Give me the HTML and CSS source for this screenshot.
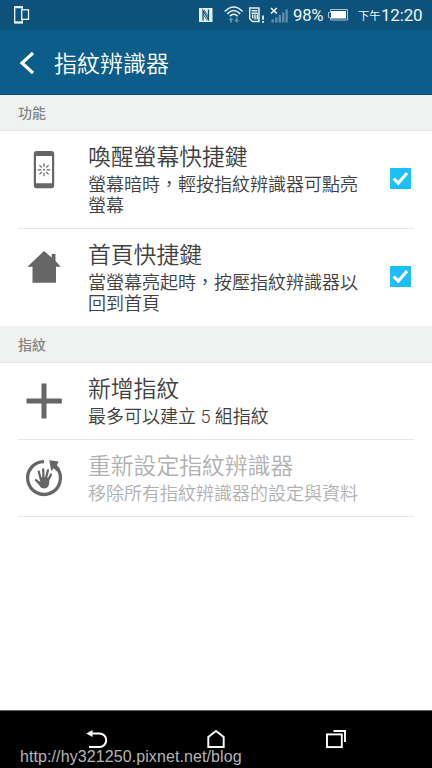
FILE: index.html
```html
<!DOCTYPE html>
<html lang="zh-Hant">
<head>
<meta charset="utf-8">
<title>指紋辨識器</title>
<link rel="stylesheet" href="styles.css">
</head>
<body>
<div class="screen">
  <div class="status">
    <svg class="st-device" width="18" height="20" viewBox="0 0 18 20" fill="none" stroke="#eef5f9">
      <path d="M9.200 4.500V2H1.700V17.500H9.200V14.500" stroke-width="1.300"/>
      <path d="M1 2.300H10M1 17.500H10" stroke-width="2"/>
      <rect x="8.700" y="4.800" width="6.800" height="9.500" stroke-width="1.300"/>
    </svg>
    <svg class="st-icons" width="92" height="20" viewBox="0 0 92 20">
      <path d="M1 3H14.500V17H1Z" fill="#e6eff4"/>
      <path d="M5 15.500V5.500L10.500 14.500V4.500" fill="none" stroke="#0d527b" stroke-width="1.300"/>
      <path d="M6.200 5L10.500 11.500M5 9L9.300 15.500" fill="none" stroke="#0d527b" stroke-width=".8"/>
      <g fill="none" stroke="#e6eff4" stroke-width="1.500">
        <path d="M26.700 6.500Q35.700-2.500 44.700 6.500M29.200 8.900Q35.700 2.300 42.200 8.900M31.700 11.300Q35.700 7.200 39.700 11.300"/>
      </g>
      <path d="M30.300 15L33 12.200L35.700 15H33.900V17.500H32.100V15ZM36 15L38.700 17.800L41.400 15H39.600V12.500H37.800V15Z" fill="#5f94b2"/>
      <g fill="none" stroke="#e6eff4" stroke-width="1.500">
        <path d="M51.700 3H61V16.500H54.500L51.700 13.700Z"/>
        <path d="M53.500 5.700H59.500M53.500 8.300H60M54.700 9.500V13.500M57 9.500V14.500M59.300 9.500V14.500"/>
        <path d="M65 10.500V14.700M65 16V17.800" stroke-width="1.900"/>
      </g>
      <path d="M73.500 14.500H76V17.500H73.500ZM77.100 12.500H79.500V17.500H77.100ZM80.600 10H83V17.500H80.600ZM84.100 7.500H86.400V17.500H84.100ZM87.500 4.500H89.800V17.500H87.500Z" fill="#5f8eac"/>
      <path d="M73 3L78.800 8.500M78.800 3L73 8.500" stroke="#f2f7fa" stroke-width="1.600"/>
    </svg>
    <span class="pct">98%</span>
    <svg class="st-batt" width="22" height="14" viewBox="0 0 22 14">
      <path d="M3.500 1.500H20.500V12H3.500V9.500H1.500V4.500H3.500Z" fill="none" stroke="#a9c5d5"/>
      <rect x="4" y="3" width="15" height="7.500" fill="#fff"/>
    </svg>
    <span class="ampm">下午</span><span class="clock">12:20</span>
  </div>
  <header class="bar">
    <svg class="back" width="16" height="24" viewBox="0 0 16 24"><path d="M14 2L3 12L14 22" fill="none" stroke="#fff" stroke-width="3.100"/></svg>
    <h1>指紋辨識器</h1>
  </header>

  <h2 class="section">功能</h2>
  <div class="row tall">
    <svg class="icon" width="52" height="48" viewBox="18 145 52 48">
      <path fill="#666" fill-rule="evenodd" d="M36.500 151H51.500Q54.200 151 54.200 153.700V185.500Q54.200 188.200 51.500 188.200H36.500Q33.800 188.200 33.800 185.500V153.700Q33.800 151 36.500 151ZM36 156V183.300H52V156Z"/>
      <g stroke="#666" stroke-width="1.200"><path d="M44 163.300V166.800M44 172.800V176.300M37.800 169.800H41.300M46.700 169.800H50.200M39.400 165.200L41.800 167.600M46.200 172L48.600 174.400M48.600 165.200L46.200 167.600M41.800 172L39.400 174.400"/></g>
      <circle cx="44" cy="169.800" r="1" fill="#666"/>
    </svg>
    <div class="text"><h3>喚醒螢幕快捷鍵</h3><p>螢幕暗時，輕按指紋辨識器可點亮<br>螢幕</p></div>
    <svg class="check" width="21" height="21" viewBox="0 0 21 21"><path fill="#1dbffa" d="M0 0H21V21H0Z"/><path d="M3.700 10.500L8.300 15.200L17 5" fill="none" stroke="#fff" stroke-width="3.200"/></svg>
  </div>
  <div class="row tall last">
    <svg class="icon" width="52" height="48" viewBox="18 243 52 48"><path fill="#666" d="M44 251L51.700 257.500V254H55.500V261L60.700 266.800H56V282.700H32.500V266.800H27.500Z"/></svg>
    <div class="text"><h3>首頁快捷鍵</h3><p>當螢幕亮起時，按壓指紋辨識器以<br>回到首頁</p></div>
    <svg class="check" width="21" height="21" viewBox="0 0 21 21"><path fill="#1dbffa" d="M0 0H21V21H0Z"/><path d="M3.700 10.500L8.300 15.200L17 5" fill="none" stroke="#fff" stroke-width="3.200"/></svg>
  </div>

  <h2 class="section second">指紋</h2>
  <div class="row">
    <svg class="icon" width="52" height="48" viewBox="18 377 52 48"><path d="M44 383.500V418.500M26.500 401H61.800" stroke="#666" stroke-width="5"/></svg>
    <div class="text"><h3>新增指紋</h3><p>最多可以建立 5 組指紋</p></div>
  </div>
  <div class="row disabled">
    <svg class="icon" width="52" height="48" viewBox="18 454 52 48">
      <path d="M44 461.600A16.400 16.400 0 1 0 57.600 468.800" fill="none" stroke="#666" stroke-width="3.300"/>
      <path fill="#666" d="M49.300 460.300L58.600 461.500L57 465.200L60 468.700L56.500 471L53.800 468.200L51.200 471Z"/>
      <path fill="none" stroke="#666" stroke-width="2.300" stroke-linecap="round" d="M41 480L38.700 471.500M43.500 479L43.200 469.300M45.700 479L48 470.300M48 480.500L51 474.500M40 483.500L36 480.200"/>
      <path fill="#666" d="M39.700 477.500Q44 476.500 49 478L49.300 482Q49 488 44.600 488.500Q40.800 488.500 39 485L36 481.500L40.500 481.500Z"/>
    </svg>
    <div class="text"><h3>重新設定指紋辨識器</h3><p>移除所有指紋辨識器的設定與資料</p></div>
  </div>

  <nav class="nav">
    <svg width="432" height="57" viewBox="0 711 432 57" fill="none" stroke="#fff">
      <path d="M91 733.500H99.500A6.700 6.700 0 0 1 99.500 747H89" stroke-width="2"/>
      <path d="M86.300 733.500L92.500 730V737Z" fill="#fff" stroke="none"/>
      <path d="M208.300 747V737L216 731L223.700 737V747Z" stroke-width="1.900"/>
      <rect x="327" y="734.400" width="14.800" height="12.700" stroke-width="1.900"/>
      <path d="M333.500 731H345V742" stroke-width="1.900"/>
    </svg>
    <span class="watermark">http://hy321250.pixnet.net/blog</span>
  </nav>
</div>
</body>
</html>
```
FILE: styles.css
```css
* { box-sizing: border-box; margin: 0; padding: 0; }
body { font-family: Roboto, "Noto Sans CJK TC", sans-serif; background: #fff; }
h1, h2, h3 { font-weight: 350; }
.screen { width: 432px; height: 768px; display: flex; flex-direction: column; overflow: hidden; background: #fff; }
.status { height: 30px; flex: none; display: flex; align-items: flex-start; background: #0d527b; color: #eef5f9; white-space: nowrap; }
.st-device { margin: 5px 0 0 13px; }
.st-icons { margin: 5px 0 0 167px; }
.pct { width: 33px; margin-left: 3px; font-size: 16.700px; line-height: 32px; letter-spacing: -.2px; }
.st-batt { margin: 8px 0 0 1px; }
.ampm { width: 23px; margin-left: 9px; font-size: 11.300px; line-height: 33px; }
.clock { font-size: 17px; line-height: 31px; letter-spacing: -.2px; }
.bar { height: 65px; flex: none; display: flex; align-items: center; padding-left: 19px; background: #0d5d8b; border-bottom: 1px solid #0b4b70; color: #fff; }
.bar h1 { margin-left: 19px; padding-top: 6px; font-size: 23px; line-height: 34px; }
.section { height: 36px; flex: none; padding-left: 18px; background: #f0f2f2; border-bottom: 1px solid #e3e5e5; color: #858585; font-size: 14px; line-height: 36px; font-weight: 500; }
.section.second { height: 37px; line-height: 38px; }
.row { height: 77px; flex: none; display: flex; margin: 0 18px; padding-top: 10px; border-bottom: 1px solid #e6e6e6; color: #404040; }
.row.tall { height: 98px; }
.row.last { border-bottom: 0; height: 97px; }
.icon { margin-top: 4px; flex: none; }
.text { margin-left: 18px; flex: 1; white-space: nowrap; }
.text h3 { font-size: 22.800px; line-height: 32px; padding-top: 1px; }
.text p { font-size: 18px; line-height: 21px; font-weight: 350; }
.check { flex: none; margin: 27px 3px 0 0; }
.disabled { color: #b0b0b0; }
.bar .back { margin-top: 1px; }
.nav { position: relative; height: 58px; margin-top: auto; flex: none; background: #000; border-top: 1px solid #666; }
.nav svg { display: block; }
.watermark { position: absolute; left: 20px; top: 35px; color: #b5b5b5; font: 16px/22px "Liberation Sans", sans-serif; letter-spacing: .09px; white-space: nowrap; }
```
